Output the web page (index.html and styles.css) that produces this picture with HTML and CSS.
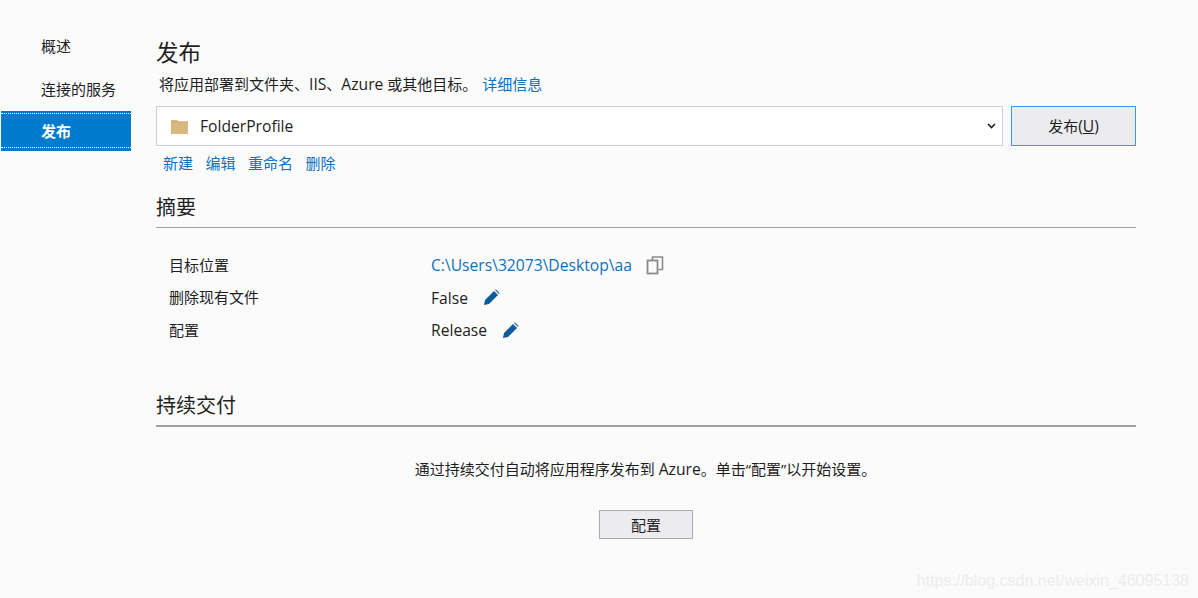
FILE: index.html
```html
<!DOCTYPE html>
<html lang="zh-CN">
<head>
<meta charset="utf-8">
<title>发布</title>
<link rel="stylesheet" href="styles.css">
</head>
<body>
<div class="page">
  <nav class="side">
    <a class="side-item">概述</a>
    <a class="side-item">连接的服务</a>
    <a class="side-item active"><span class="side-band">发布</span></a>
  </nav>
  <main class="main">
    <h1 class="title">发布</h1>
    <p class="intro">将应用部署到文件夹、<span class="latin">IIS</span>、<span class="latin">Azure</span> 或其他目标。<a class="link more">详细信息</a></p>
    <div class="profile-row">
      <div class="select">
        <svg class="folder" width="17" height="15" viewBox="0 0 17 15"><path d="M0 1h6l1.5 1.5H17V15H0z" fill="#d9b77e"/><path d="M0 2.5h17v1.2H0z" fill="#cfae76"/></svg>
        <span class="select-text latin">FolderProfile</span>
        <svg class="chev" width="9" height="6" viewBox="0 0 9 6"><path d="M1 1l3.5 3.5L8 1" fill="none" stroke="#222" stroke-width="1.7"/></svg>
      </div>
      <button class="btn publish">发布<span class="latin">(<u>U</u>)</span></button>
    </div>
    <div class="actions">
      <a class="link">新建</a><a class="link">编辑</a><a class="link">重命名</a><a class="link">删除</a>
    </div>
    <h2 class="section first">摘要</h2>
    <div class="summary">
      <div class="label">目标位置</div>
      <div class="value latin"><a class="link">C:\Users\32073\Desktop\aa</a>
        <svg class="copy" width="18" height="19" viewBox="0 0 18 19"><path d="M6.5 4V1h10v12.5H12.5" fill="none" stroke="#8a8a8a" stroke-width="1.6"/><rect x="1.5" y="4.5" width="10" height="13" fill="none" stroke="#8a8a8a" stroke-width="1.8"/></svg>
      </div>
      <div class="label">删除现有文件</div>
      <div class="value latin">False
        <svg class="pen" width="17" height="17" viewBox="0 0 17 17"><path d="M1 16l1-5L11 2l4 4-9 9z" fill="#0f5a9c"/><path d="M12 1l1-.5 3.5 3.5-.5 1z" fill="#0f5a9c"/></svg>
      </div>
      <div class="label">配置</div>
      <div class="value latin">Release
        <svg class="pen" width="17" height="17" viewBox="0 0 17 17"><path d="M1 16l1-5L11 2l4 4-9 9z" fill="#0f5a9c"/><path d="M12 1l1-.5 3.5 3.5-.5 1z" fill="#0f5a9c"/></svg>
      </div>
    </div>
    <h2 class="section second">持续交付</h2>
    <p class="cd-text">通过持续交付自动将应用程序发布到 <span class="latin">Azure</span>。单击“配置”以开始设置。</p>
    <div class="cd-action"><button class="btn config">配置</button></div>
  </main>
</div>
<div class="watermark">https://blog.csdn.net/weixin_46095138</div>
</body>
</html>
```
FILE: styles.css
```css
* { box-sizing: border-box; }
html, body { margin: 0; height: 100%; }
body {
  background: #fbfbfc;
  color: #1e1e1e;
  font-family: "Open Sans", "Noto Sans CJK SC", sans-serif;
  font-size: 15px;
  overflow: hidden;
  position: relative;
}
.latin { font-size: 15.65px; }
.page { display: flex; height: 598px; }
.side { width: 130px; margin-left: 1px; padding-top: 25px; flex: none; }
.side-item {
  display: flex;
  align-items: center;
  height: 42.5px;
  padding-left: 40px;
  line-height: 20px;
}
.side-item.active {
  height: 40px;
  margin-top: 1px;
  padding: 2px 0 3px;
  background: #007acc;
  color: #fff;
  font-weight: 700;
}
.side-band {
  flex: 1;
  height: 100%;
  display: flex;
  align-items: center;
  padding-left: 40px;
  border-top: 1px dotted #fff;
  border-bottom: 1px dotted #fff;
}
.main { width: 980px; margin-left: 25px; padding-top: 37px; }
.title { margin: 0; font-size: 22.5px; font-weight: 400; line-height: 32px; }
.intro { margin: 0; padding-left: 3px; height: 37px; line-height: 30px; }
.link { color: #0e70c0; }
.more { margin-left: 5px; }
.profile-row { display: flex; gap: 8px; }
.select {
  flex: 1;
  height: 40px;
  background: #fff;
  border: 1px solid #ccceDB;
  display: flex;
  align-items: center;
  padding-left: 14px;
  padding-right: 6px;
}
.select-text { margin-left: 12px; flex: 1; }
.folder { flex: none; }
.btn {
  font-family: inherit;
  font-size: 15px;
  color: #1e1e1e;
  background: #ececf0;
  padding: 0;
}
.publish { width: 125px; height: 40px; border: 1px solid #3399ff; }
.actions { display: flex; gap: 12.5px; padding-left: 7px; height: 32px; align-items: center; }
.section { margin: 0; font-size: 20px; font-weight: 400; line-height: 32px; border-bottom: 1px solid #a0a0a8; }
.section.first { height: 36px; margin-top: 14px; }
.section.second { height: 37px; margin-top: 43.5px; border-bottom: 2px solid #a0a0a0; }
.summary {
  display: grid;
  grid-template-columns: 262px 1fr;
  grid-auto-rows: 32.5px;
  padding: 21px 0 0 13px;
  align-items: center;
}
.label { padding-bottom: 2px; }
.value { display: flex; align-items: center; }
.copy { margin-left: 14px; }
.pen { margin-left: 15px; }
.cd-text { margin: 0; padding-top: 32px; line-height: 20px; text-align: center; margin-left: -1px; }
.cd-action { display: flex; justify-content: center; padding-top: 31px; }
.config { width: 94px; height: 29px; border: 1px solid #acacac; }
.watermark {
  position: absolute;
  right: 9px;
  bottom: 8px;
  font-family: "Liberation Sans", sans-serif;
  font-size: 16px;
  color: #ececec;
}
```
